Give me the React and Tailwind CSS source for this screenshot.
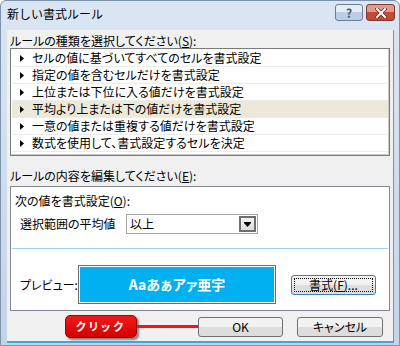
import React from 'react';

const jp = { fontFamily: '"Noto Sans CJK JP", "Noto Sans", sans-serif' };

const rules = [
    'セルの値に基づいてすべてのセルを書式設定',
    '指定の値を含むセルだけを書式設定',
    '上位または下位に入る値だけを書式設定',
    '平均より上または下の値だけを書式設定',
    '一意の値または重複する値だけを書式設定',
    '数式を使用して、書式設定するセルを決定',
];

// Vista style push button
const Button = ({ children, className = '', focused = false }) => (
    <div
        className={`flex items-center justify-center rounded-[3px] border ${focused ? 'border-[#3c7fb1]' : 'border-[#707070]'} bg-gradient-to-b from-[#f2f2f2] from-50% to-[#dddddd] to-50% text-[12px] text-black ${className}`}
    >
        {focused ? (
            <span className="flex h-[calc(100%-4px)] w-[calc(100%-4px)] items-center justify-center border border-dotted border-black">
                {children}
            </span>
        ) : children}
    </div>
);

const App = () => {
    return (
        <div
            className="flex h-[346px] w-[400px] flex-col overflow-hidden rounded-t-[6px] border border-[#7d92ab] bg-gradient-to-b from-[#dbe6f3] to-[#c3d4e9] [font-feature-settings:'palt']"
            style={jp}
        >
            {/* title bar */}
            <div className="flex h-[29px] shrink-0 items-start pl-[6px] pr-[4px]">
                <span className="mt-[6px] text-[12px] leading-[14px] text-black [font-feature-settings:normal]">新しい書式ルール</span>
                <div className="ml-auto mt-[3px] flex gap-[3px]">
                    <div className="flex h-[17px] w-[28px] items-center justify-center rounded-[3px] border border-[#6c7d95] bg-gradient-to-b from-[#e4edf7] from-50% to-[#bccee4] to-50% text-[12px] font-bold leading-none text-[#4a5a70]">
                        ?
                    </div>
                    <div className="flex h-[17px] w-[29px] items-center justify-center rounded-[3px] border border-[#7a3a32] bg-gradient-to-b from-[#e39a8d] from-50% to-[#c44a36] to-50%">
                        <svg width="12" height="10" viewBox="0 0 12 10">
                            <path d="M2 1 L10 9 M10 1 L2 9" stroke="#5a2a22" strokeWidth="3.4" strokeLinecap="square" />
                            <path d="M2 1 L10 9 M10 1 L2 9" stroke="#ffffff" strokeWidth="2" strokeLinecap="square" />
                        </svg>
                    </div>
                </div>
            </div>

            {/* client area */}
            <div className="ml-[6px] mr-[5px] flex h-[313px] flex-col border-b-2 border-r border-[#3ca8e0] bg-[#f0f0f0] px-[3px] text-[12px] text-black">
                <div className="mt-[4px] h-[14px] leading-[14px]">
                    ルールの種類を選択してください(<span className="underline">S</span>):
                </div>

                {/* rule list */}
                <div className="h-[108px] w-[380px] border border-[#7a7a7a] bg-white pl-[1px] pr-[1px] pt-[1px] shadow-[inset_-1px_-1px_0_#c9c9c9]">
                    {rules.map((rule, idx) => (
                        <div
                            key={rule}
                            className={`flex h-[17px] items-center border-b border-[#ececec] pl-[8px] leading-[16px] ${idx === 3 ? 'bg-[#ece9d8]' : ''}`}
                        >
                            <svg width="5" height="7" viewBox="0 0 5 7" className="mr-[7px]">
                                <path d="M0 0 L4 3.5 L0 7 Z" fill="#000" />
                            </svg>
                            {rule}
                        </div>
                    ))}
                </div>

                <div className="mt-[13px] h-[14px] leading-[14px]">
                    ルールの内容を編集してください(<span className="underline">E</span>):
                </div>

                {/* edit group */}
                <div className="mt-[3px] flex h-[125px] w-[380px] flex-col border border-[#828790] bg-white">
                    <div className="mt-[7px] h-[14px] pl-[4px] leading-[14px]">
                        次の値を書式設定(<span className="underline">O</span>):
                    </div>
                    <div className="mt-[6px] flex h-[20px] items-center pl-[9px]">
                        <span className="w-[106px]">選択範囲の平均値</span>
                        <div className="flex h-[20px] w-[132px] items-center border border-[#a5a5a5] bg-white pl-[3px] pr-[1px]">
                            <span>以上</span>
                            <div className="ml-auto flex h-[16px] w-[17px] items-center justify-center border-2 border-[#6f6f6f] bg-gradient-to-b from-[#f4f4f4] to-[#dadada]">
                                <svg width="7" height="5" viewBox="0 0 7 5">
                                    <path d="M0 0 H7 V1 L3.5 5 L0 1 Z" fill="#000" />
                                </svg>
                            </div>
                        </div>
                    </div>
                    <div className="mx-[1px] mt-[14px] h-[1px] bg-[#a3cdee]" />
                    <div className="mt-[16px] flex items-center pl-[9px]">
                        <span className="w-[58px]">プレビュー:</span>
                        <div className="h-[39px] w-[198px] border border-[#6d6d6d] bg-white p-[1px]">
                            <div className="flex h-full items-center justify-center bg-[#00b0f0] text-[14px] font-bold text-white">
                                Aaあぁアァ亜宇
                            </div>
                        </div>
                        <Button focused className="ml-[15px] h-[20px] w-[85px]">
                            書式(<span className="underline">F</span>)...
                        </Button>
                    </div>
                </div>

                {/* bottom buttons */}
                <div className="mt-[4px] flex items-center">
                    <div className="ml-[55px] flex h-[23px] w-[72px] items-center justify-center rounded-[5px] border border-[#9c0000] bg-gradient-to-b from-[#f01818] to-[#d40000] text-[11px] font-bold tracking-[3px] text-white shadow-[2px_2px_2px_rgba(0,0,0,0.45)]">
                        クリック
                    </div>
                    <div className="h-[3px] w-[61px] bg-[#ff1010]" />
                    <Button className="h-[20px] w-[85px]">OK</Button>
                    <Button className="ml-[14px] h-[20px] w-[86px]">キャンセル</Button>
                </div>
            </div>
        </div>
    );
};

export default App;
